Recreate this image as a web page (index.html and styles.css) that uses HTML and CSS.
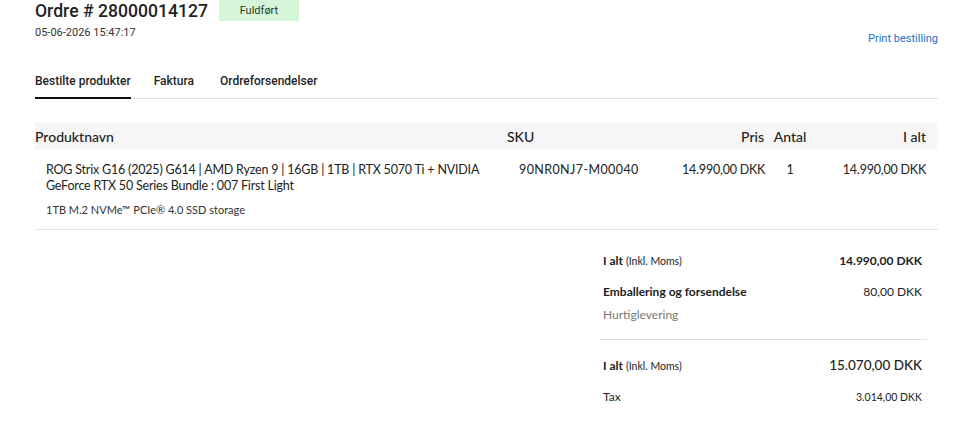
FILE: index.html
```html
<!DOCTYPE html>
<html lang="da">
<head>
<meta charset="utf-8">
<title>Ordre # 28000014127</title>
<link rel="stylesheet" href="styles.css">
</head>
<body>
<div class="page">
  <div class="top">
    <div class="title-block">
      <div class="title-row">
        <h1 class="title">Ordre # 28000014127</h1>
        <span class="badge">Fuldført</span>
      </div>
      <div class="date">05-06-2026 15:47:17</div>
    </div>
    <a class="print" href="#">Print bestilling</a>
  </div>

  <nav class="tabs">
    <span class="tab active">Bestilte produkter</span>
    <span class="tab">Faktura</span>
    <span class="tab">Ordreforsendelser</span>
  </nav>

  <div class="table">
    <div class="thead">
      <div class="th">Produktnavn</div>
      <div class="th">SKU</div>
      <div class="th right">Pris</div>
      <div class="th center">Antal</div>
      <div class="th right">I alt</div>
    </div>
    <div class="trow">
      <div class="td name">
        <div class="pname">ROG Strix G16 (2025) G614 | AMD Ryzen 9 | 16GB | 1TB | RTX 5070 Ti + NVIDIA GeForce RTX 50 Series Bundle : 007 First Light</div>
        <div class="popt">1TB M.2 NVMe™ PCIe® 4.0 SSD storage</div>
      </div>
      <div class="td sku">90NR0NJ7-M00040</div>
      <div class="td right">14.990,00 DKK</div>
      <div class="td center">1</div>
      <div class="td right">14.990,00 DKK</div>
    </div>
  </div>

  <div class="summary">
    <div class="srow">
      <span class="slabel">I alt <small>(Inkl. Moms)</small></span>
      <span class="sval strong">14.990,00 DKK</span>
    </div>
    <div class="srow">
      <span class="slabel">Emballering og forsendelse</span>
      <span class="sval">80,00 DKK</span>
    </div>
    <div class="snote">Hurtiglevering</div>
    <div class="sdivider"></div>
    <div class="srow">
      <span class="slabel">I alt <small>(Inkl. Moms)</small></span>
      <span class="sval big">15.070,00 DKK</span>
    </div>
    <div class="srow">
      <span class="slabel normal">Tax</span>
      <span class="sval small">3.014,00 DKK</span>
    </div>
  </div>
</div>
</body>
</html>
```

FILE: styles.css
```css
* { box-sizing: border-box; }
html, body { margin: 0; padding: 0; background: #fff; }
body { font-family: "Lato", "Open Sans", sans-serif; color: #222; }

.page { padding: 0 22px 0 35px; }

.top {
  display: flex;
  justify-content: space-between;
  align-items: flex-start;
}
.title-row { display: flex; align-items: flex-start; gap: 11px; }
.title {
  font-family: "Roboto", sans-serif;
  font-size: 17.6px;
  font-weight: 500;
  line-height: 23px;
  margin: 0;
  color: #1f1f1f;
}
.badge {
  font-family: "Roboto", sans-serif;
  font-size: 11px;
  background: #d5f6d8;
  color: #2a3a2c;
  height: 21px;
  width: 80px;
  display: flex;
  align-items: center;
  justify-content: center;
}
.date {
  font-family: "Roboto", sans-serif;
  font-size: 11px;
  color: #333;
  margin-top: 3px;
}
.print {
  font-family: "Roboto", sans-serif;
  font-size: 11px;
  color: #2470cf;
  text-decoration: none;
  margin-top: 32px;
}

.tabs {
  display: flex;
  gap: 23px;
  margin-top: 29px;
  border-bottom: 1px solid #ddd;
  font-family: "Roboto", sans-serif;
  font-size: 12px;
  font-weight: 500;
}
.tab { padding-bottom: 9px; color: #1f1f1f; }
.tab.active { border-bottom: 2px solid #111; margin-bottom: -1px; }
.tab + .tab + .tab { margin-left: 3px; }

.table { margin-top: 23px; }
.thead, .trow {
  display: grid;
  grid-template-columns: 472px 175px 82px 52px 122px;
}
.thead {
  background: #f6f6f6;
  height: 28px;
  align-items: center;
  font-size: 14px;
  font-weight: 500;
  color: #222;
}
.th.right:last-child { padding-right: 12px; }
.right { text-align: right; white-space: nowrap; }
.center { text-align: center; }

.trow {
  border-bottom: 1px solid #e2e2e2;
  font-size: 12.5px;
  letter-spacing: -0.2px;
  padding-top: 12px;
  padding-bottom: 11px;
  line-height: 16px;
}
.td.name { padding-left: 11px; padding-right: 14px; }
.td.sku { padding-left: 12px; letter-spacing: 0.4px; }
.td.right:last-child { padding-right: 12px; }
.pname { color: #222; }
.popt { font-size: 11px; margin-top: 8px; color: #333; letter-spacing: 0; }

.summary {
  width: 327px;
  margin: 15px 11px 0 auto;
  font-size: 12px;
}
.srow {
  display: flex;
  justify-content: space-between;
  align-items: baseline;
  padding: 0 5px 0 3px;
  height: 31px;
  line-height: 31px;
}
.slabel { font-weight: 700; }
.slabel small { font-size: 10.5px; font-weight: 400; }
.slabel.normal { font-weight: 400; }
.sval { font-weight: 400; }
.sval.strong { font-weight: 700; font-size: 12px; }
.sval.big { font-weight: 500; font-size: 13.5px; }
.sval.small { font-size: 10.5px; }
.snote { color: #777; padding-left: 3px; line-height: 16px; margin-top: 0; }
.sdivider { border-top: 1px solid #ddd; margin: 16px 0 10px; }
```
